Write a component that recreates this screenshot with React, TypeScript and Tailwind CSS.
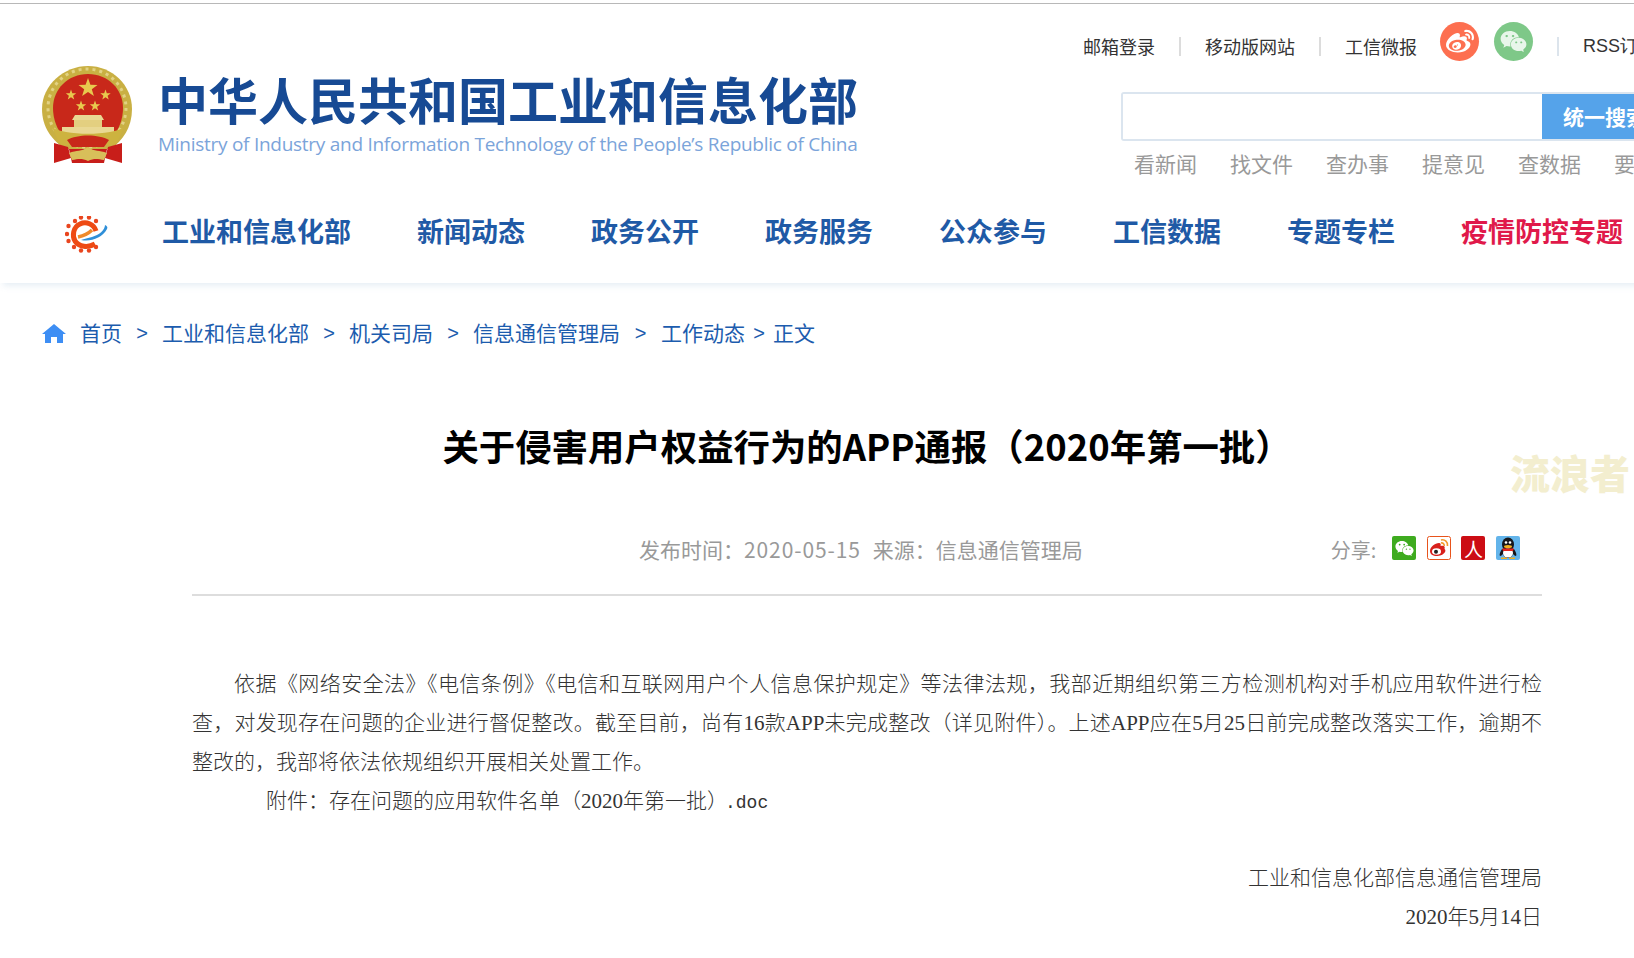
import React from 'react';
import { FaWeibo, FaWeixin } from 'react-icons/fa';

const sans = 'font-["Noto_Sans_CJK_SC","Liberation_Sans",sans-serif]';

const topLinks = ['邮箱登录', '移动版网站', '工信微报'];
const hotLinks = ['看新闻', '找文件', '查办事', '提意见', '查数据', '要'];
const navItems = ['工业和信息化部', '新闻动态', '政务公开', '政务服务', '公众参与', '工信数据', '专题专栏'];

const starPoints = (cx: number, cy: number, r: number) =>
  Array.from({ length: 10 }, (_, i) => {
    const a = -Math.PI / 2 + (i * Math.PI) / 5;
    const d = i % 2 === 0 ? r : r * 0.4;
    return `${(cx + d * Math.cos(a)).toFixed(1)},${(cy + d * Math.sin(a)).toFixed(1)}`;
  }).join(' ');

const Emblem: React.FC = () => (
  <svg width="92" height="100" viewBox="0 0 92 100" className="blur-[0.6px]">
    <path d="M47 1C71 1 91 20 91 44c0 18-9 32-22 40H25C11 76 1 62 1 44 1 20 23 1 47 1z" fill="#c9b043" />
    <circle cx="46" cy="43" r="39" fill="none" stroke="#e2d283" strokeWidth="3" strokeDasharray="3 4" />
    <path d="M47 9c20 0 35 15 35 34 0 11-4 22-11 29H23c-7-7-11-18-11-29C12 24 27 9 47 9z" fill="#c8281a" />
    <polygon points={starPoints(47, 23, 10)} fill="#e8c94e" />
    <polygon points={starPoints(30, 30, 5.500)} fill="#e8c94e" />
    <polygon points={starPoints(64.500, 30, 5.500)} fill="#e8c94e" />
    <polygon points={starPoints(40, 41, 5.500)} fill="#e8c94e" />
    <polygon points={starPoints(54, 41, 5.500)} fill="#e8c94e" />
    <path d="M34 50h26l3 5H31z" fill="#e9d894" />
    <rect x="33" y="55" width="28" height="7" fill="#e3cf80" />
    <rect x="21" y="62" width="52" height="7" fill="#e9d894" />
    <path d="M11 62c10 9 62 9 72 0l-8 18H19z" fill="#cdb33f" />
    <path d="M26 75c10-6 32-6 42 0l-5 7H31z" fill="#c8281a" />
    <path d="M13 78l14 4 3 11-17 5z" fill="#c81e1a" />
    <path d="M81 78l-14 4-3 11 17 5z" fill="#c81e1a" />
    <path d="M28 84h38l-3 14H31z" fill="#c81e1a" />
    <path d="M28 88c8-3 12-1 19-6 7 5 11 3 19 6l-3 7c-6-1-10-2-16 1-6-3-10-2-16-1z" fill="#d8bf5a" />
  </svg>
);

const NavLogo: React.FC = () => (
  <svg width="44" height="37" viewBox="0 0 44 37" className="blur-[0.3px]">
    {[[10, 5], [16, 1.500], [24, 1.500], [31, 5], [3.500, 10], [2, 18], [3.500, 25], [9, 31], [16, 34.500], [24, 34.500], [31, 31]].map(([x, y]) => (
      <circle key={`${x}-${y}`} cx={x} cy={y} r="2.200" fill="#e9451e" />
    ))}
    <path d="M31 15C29 8 21 5 15 8 8 11 7 20 10 25c4 6 13 7 20 3" fill="none" stroke="#ee4a14" strokeWidth="5" />
    <path d="M13 21c5-1 10-3 14-7" fill="none" stroke="#f08a2a" strokeWidth="3.500" />
    <path d="M16 24c10 2 21-2 26-11 1-2 0-3-2-4 0 5-6 10-13 12-4 1-8 2-11 3z" fill="#2f8fd8" />
  </svg>
);

const Home: React.FC = () => (
  <svg width="24" height="19" viewBox="0 0 24 19">
    <path d="M12 0l12 10h-3v9h-6v-6H9v6H3v-9H0z" fill="#3d8ef4" />
  </svg>
);

const ShareWeibo: React.FC = () => (
  <svg width="24" height="24" viewBox="0 0 24 24">
    <rect x="0.500" y="0.500" width="23" height="23" rx="2" fill="#fff" stroke="#e8541c" />
    <path d="M3 15c0-4 5-8 9-8 2 0 2 2 1.500 3 3-1 5 0 4 3 2 1 1 6-7 7-5 0-7.500-2-7.500-5z" fill="#d8201c" />
    <ellipse cx="9.500" cy="15.500" rx="4.500" ry="3.200" fill="#fff" />
    <circle cx="9" cy="15.700" r="2" fill="#222" />
    <path d="M14 4c4-1 7 2 6.500 6M14 7c2-.5 3.500 1 3.200 3" fill="none" stroke="#f39a2e" strokeWidth="1.600" />
  </svg>
);

const QQ: React.FC = () => (
  <svg width="24" height="24" viewBox="0 0 24 24">
    <rect width="24" height="24" rx="2" fill="#63b4ea" />
    <ellipse cx="12" cy="8.500" rx="6" ry="7" fill="#16161a" />
    <path d="M6 13c-2 3-3 6-2 7 1 0 2-1 3-2 1 3 3 4 5 4s4-1 5-4c1 1 2 2 3 2 1-1 0-4-2-7z" fill="#16161a" />
    <ellipse cx="12" cy="17" rx="5" ry="4.500" fill="#fff" />
    <ellipse cx="12" cy="10.500" rx="4" ry="1.500" fill="#f2b01e" />
    <path d="M6 12.500h12l-1 2.500H7z" fill="#e3241c" />
    <path d="M5 21.500h6v1.500H5zM13 21.500h6v1.500h-6z" fill="#f2b01e" />
    <circle cx="10" cy="6.500" r="1.300" fill="#fff" />
    <circle cx="14" cy="6.500" r="1.300" fill="#fff" />
  </svg>
);

const crumbs = [
  { text: '首页', gap: 'w-[40px]' },
  { text: '工业和信息化部', gap: 'w-[40px]' },
  { text: '机关司局', gap: 'w-[40px]' },
  { text: '信息通信管理局', gap: 'w-[41px]' },
  { text: '工作动态', gap: 'w-[28px]' },
];

export default function App() {
  return (
    <div className={`h-screen w-screen overflow-hidden bg-white ${sans}`}>
      <div className="mt-[3px] border-t border-[#b8b8b8]" />

      <header className="relative z-10 w-[1700px]">
        <div className="flex h-[196px] items-start">
          <div className="ml-[41px] mt-[61px] shrink-0">
            <Emblem />
          </div>
          <div className="ml-[25px] mt-[61px] w-[880px] shrink-0">
            <div className="text-[50px] font-bold leading-[67px] text-[#174a94]">中华人民共和国工业和信息化部</div>
            <div className='whitespace-nowrap font-["Open_Sans"] text-[19px] leading-[24px] tracking-[-0.27px] text-[#7ba4da]'>
              Ministry of Industry and Information Technology of the People’s Republic of China
            </div>
          </div>
          <div className="ml-[45px] w-[590px] shrink-0">
            <div className="mt-[18px] flex h-[39px] items-center text-[18px] text-[#333]">
              {topLinks.map((link, i) => (
                <React.Fragment key={link}>
                  <span className="mt-[9px] whitespace-nowrap">{link}</span>
                  {i < 2 && <span className="mx-[24px] mt-[10px] h-[19px] w-[2px] bg-[#dcdcdc]" />}
                </React.Fragment>
              ))}
              <span className="ml-[23px] flex h-[39px] w-[39px] items-center justify-center rounded-full bg-[#fd6f50] text-[28px] text-white">
                <FaWeibo />
              </span>
              <span className="ml-[15px] flex h-[39px] w-[39px] items-center justify-center rounded-full bg-[#7ec888] text-[27px] text-[#e8f6ea]">
                <FaWeixin />
              </span>
              <span className="mx-[24px] mt-[10px] h-[19px] w-[2px] bg-[#dce4ec]" />
              <span className="mt-[9px] whitespace-nowrap font-['Liberation_Sans'] text-[#333]">RSS订阅</span>
            </div>
            <div className="ml-[38px] mt-[31px] flex h-[49px] w-[560px] overflow-hidden rounded-[3px] border-2 border-[#dbe5ef]">
              <div className="flex-1 bg-white" />
              <div className="flex w-[137px] items-center justify-start bg-[#55a3ea] pl-[21px] text-[21px] font-bold text-white">统一搜索</div>
            </div>
            <div className="ml-[51px] mt-[5px] flex h-[36px] items-center gap-[33px] whitespace-nowrap text-[21px] text-[#999]">
              {hotLinks.map((link) => (
                <span key={link}>{link}</span>
              ))}
            </div>
          </div>
        </div>

        <nav className="flex h-[83px] items-start bg-white shadow-[0_6px_6px_-3px_rgba(205,220,232,0.45)]">
          <div className="ml-[65px] mt-[16px] shrink-0">
            <NavLogo />
          </div>
          <div className="ml-[53px] flex h-[62px] items-center gap-[66px] whitespace-nowrap text-[27px] font-bold text-[#1f5aa6]">
            {navItems.map((item) => (
              <span key={item}>{item}</span>
            ))}
            <span className="text-[#e0194a]">疫情防控专题</span>
          </div>
        </nav>
      </header>

      <div className="ml-[42px] mt-[32px] flex h-[36px] items-center whitespace-nowrap text-[21px] text-[#1c5cae]">
        <Home />
        <span className="ml-[14px] flex items-center">
          {crumbs.map((c) => (
            <React.Fragment key={c.text}>
              <span>{c.text}</span>
              <span className={`${c.gap} text-center font-['Liberation_Sans'] text-[20px]`}>&gt;</span>
            </React.Fragment>
          ))}
          <span>正文</span>
        </span>
      </div>

      <main className="relative mx-[192px] mt-[69px] w-[1350px]">
        <h1 className="text-center text-[36.4px] font-bold leading-[50px] text-black">
          关于侵害用户权益行为的APP通报（2020年第一批）
        </h1>
        <div className="absolute left-[1318px] top-[28px] whitespace-nowrap text-[40px] font-black leading-[48px] text-[#f3eecf]">流浪者</div>

        <div className="mt-[60px] flex h-[40px] items-center text-[21px] text-[#999]">
          <div className="ml-[447px] whitespace-nowrap">
            发布时间：<span className="tracking-[0.9px]">2020-05-15</span>
            <span className="ml-[12px]">来源：信息通信管理局</span>
          </div>
          <div className="ml-[248px] flex items-center whitespace-nowrap text-[20px]">
            <span className="-mt-[1px]">分享:</span>
            <span className="-mt-[4px] ml-[16px] flex h-[24px] w-[24px] items-center justify-center rounded-[2px] bg-[#3eab1f] text-[19px] text-white">
              <FaWeixin />
            </span>
            <span className="-mt-[4px] ml-[11px]">
              <ShareWeibo />
            </span>
            <span className="-mt-[4px] ml-[10px] flex h-[24px] w-[24px] items-center justify-center rounded-[2px] bg-[#cc0d14] text-[19px] leading-none text-white">人</span>
            <span className="-mt-[4px] ml-[11px]">
              <QQ />
            </span>
          </div>
        </div>

        <div className="mt-[24px] h-[2px] bg-[#dddddd]" />

        <article className='mt-[69px] font-["Liberation_Serif","Noto_Sans_CJK_SC",serif] text-[21px] font-light leading-[39px] text-[#333]'>
          <p className="text-justify indent-[42px]">
            依据《网络安全法》《电信条例》《电信和互联网用户个人信息保护规定》等法律法规，我部近期组织第三方检测机构对手机应用软件进行检查，对发现存在问题的企业进行督促整改。截至目前，尚有16款APP未完成整改（详见附件）。上述APP应在5月25日前完成整改落实工作，逾期不整改的，我部将依法依规组织开展相关处置工作。
          </p>
          <p className="indent-[74px]">
            附件：存在问题的应用软件名单（2020年第一批）<span className="-ml-[3px] font-['Liberation_Mono'] text-[18px]">.doc</span>
          </p>
          <p className="h-[36px]" />
          <p className="text-right">工业和信息化部信息通信管理局</p>
          <p className="text-right">2020年5月14日</p>
        </article>
      </main>
    </div>
  );
}
